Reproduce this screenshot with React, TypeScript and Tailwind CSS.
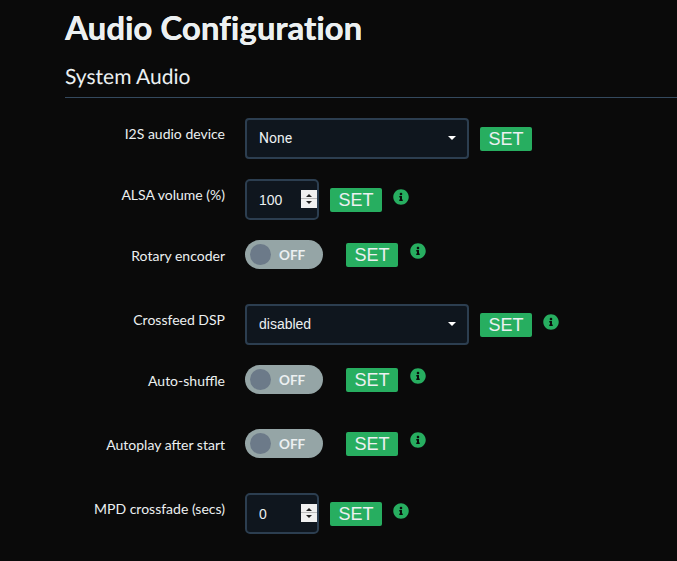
import React from 'react';
import { FaInfoCircle } from 'react-icons/fa';

const SetButton: React.FC<{ className?: string }> = ({ className = '' }) => (
  <button className={`h-6 w-[52px] shrink-0 rounded-[2px] bg-[#27ae60] pb-px text-center text-[18px] leading-[22px] text-[#ecf0f1] font-['Liberation_Sans',sans-serif] ${className}`}>
    SET
  </button>
);

const Info: React.FC<{ className?: string }> = ({ className = '' }) => (
  <FaInfoCircle className={`h-4 w-4 shrink-0 text-[#27ae60] ${className}`} />
);

const Label: React.FC<{ children: React.ReactNode; top?: string }> = ({ children, top = 'mt-1.5' }) => (
  <label className={`w-40 shrink-0 text-right text-sm leading-5 text-[#ecf0f1] ${top}`}>{children}</label>
);

const Select: React.FC<{ value: string; font: string }> = ({ value, font }) => (
  <div className="relative h-[41px] w-56 shrink-0">
    <select
      defaultValue={value}
      className={`h-full w-full appearance-none rounded border-2 border-[#2c3e50] bg-[#0f161e] pl-3 pb-px text-sm text-[#ecf0f1] outline-none ${font}`}
    >
      <option>{value}</option>
    </select>
    <span className="absolute right-[13px] top-[18px] h-0 w-0 border-x-4 border-t-4 border-x-transparent border-t-white" />
  </div>
);

const NumberField: React.FC<{ value: string }> = ({ value }) => (
  <div className="relative h-[41px] w-[74px] shrink-0">
    <input
      readOnly
      value={value}
      className="h-full w-full rounded-[5px] border-2 border-[#2c3e50] bg-[#0f161e] pl-3 text-sm text-[#ecf0f1] outline-none font-['Liberation_Sans',sans-serif]"
    />
    {/* spinner */}
    <div className="absolute left-14 top-[11px] flex h-[18px] w-4 flex-col items-center justify-around bg-[#f0f0f0] py-[3px]">
      <span className="h-0 w-0 border-x-[3px] border-b-[3px] border-x-transparent border-b-[#222]" />
      <span className="h-px w-full bg-[#bbb]" />
      <span className="h-0 w-0 border-x-[3px] border-t-[3px] border-x-transparent border-t-[#222]" />
    </div>
  </div>
);

const Toggle: React.FC = () => (
  <div className="flex h-[29px] w-[78px] shrink-0 items-center rounded-full bg-[#95a5a6] pl-[5px]">
    <span className="h-[21px] w-[21px] rounded-full bg-[#6c7a89]" />
    <span className="ml-2 mt-[2px] text-[13.5px] font-bold text-[#ecf0f1]">OFF</span>
  </div>
);

const ToggleRow: React.FC<{ label: string }> = ({ label }) => (
  <div className="mb-[35px] flex items-start">
    <Label top="mt-1.5">{label}</Label>
    <div className="ml-5 flex items-start">
      <Toggle />
      <SetButton className="ml-[23px] mt-[3px]" />
      <Info className="ml-3 mt-[3px]" />
    </div>
  </div>
);

const App: React.FC = () => {
  return (
    <div className="h-[561px] overflow-hidden bg-[#0a0a0a] pl-[65px] font-['Lato',sans-serif]">
      <h1 className="pt-[7px] text-[33px] font-bold leading-10 text-[#ecf0f1] [font-variant-ligatures:none] [text-shadow:0.3px_0_0_#ecf0f1]">Audio Configuration</h1>
      <h2 className="mt-[10px] border-b border-[#34495e] pb-[4px] pt-[3px] text-[21px] leading-[33px] [text-rendering:geometricPrecision] text-[#ecf0f1]">System Audio</h2>

      <div className="mt-5">
        <div className="mb-5 flex items-start">
          <Label>I2S audio device</Label>
          <div className="ml-5 flex items-start">
            <Select value="None" font="font-['Roboto',sans-serif]" />
            <SetButton className="ml-[11px] mt-[9px]" />
          </div>
        </div>

        <div className="mb-5 flex items-start">
          <Label>ALSA volume (%)</Label>
          <div className="ml-5 flex items-start">
            <NumberField value="100" />
            <SetButton className="ml-[11px] mt-[9px]" />
            <Info className="ml-[11px] mt-[10px]" />
          </div>
        </div>

        <ToggleRow label="Rotary encoder" />

        <div className="mb-5 flex items-start">
          <Label>Crossfeed DSP</Label>
          <div className="ml-5 flex items-start">
            <Select value="disabled" font="font-['Liberation_Sans',sans-serif]" />
            <SetButton className="ml-[11px] mt-[9px]" />
            <Info className="ml-[11px] mt-[10px]" />
          </div>
        </div>

        <ToggleRow label="Auto-shuffle" />
        <ToggleRow label="Autoplay after start" />

        <div className="flex items-start">
          <Label>MPD crossfade (secs)</Label>
          <div className="ml-5 flex items-start">
            <NumberField value="0" />
            <SetButton className="ml-[11px] mt-[9px]" />
            <Info className="ml-[11px] mt-[10px]" />
          </div>
        </div>
      </div>
    </div>
  );
};

export default App;
